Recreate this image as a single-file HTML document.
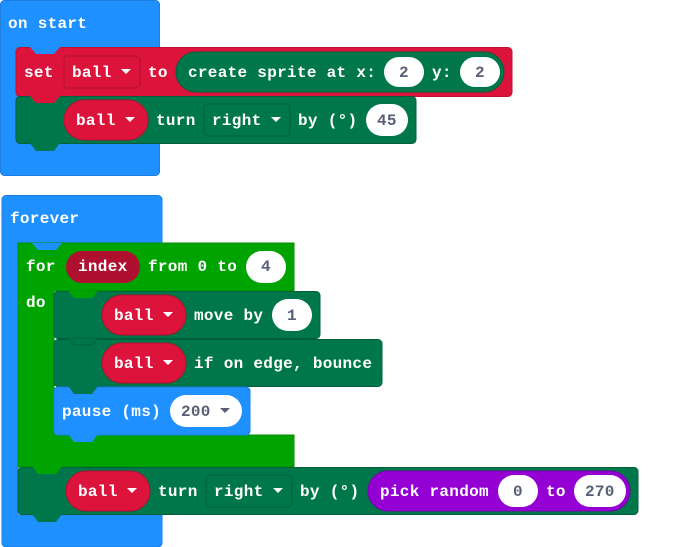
<!DOCTYPE html>
<html><head><style>
html,body{margin:0;padding:0;background:#fff;width:690px;height:547px;overflow:hidden}
svg text{font-family:"Liberation Mono",monospace;font-weight:bold;font-size:16px;letter-spacing:0.3px;fill:#fff}
svg text.n{fill:#575e75}
</style></head><body>
<svg width="690" height="547" xmlns="http://www.w3.org/2000/svg">
<!-- on start -->
<rect x="0.5" y="0.5" width="159" height="175" rx="4" fill="#1e90ff" stroke="#1a7fe0"/>
<text x="8" y="28">on start</text>
<!-- set block -->
<rect x="16" y="47.5" width="496" height="49" rx="4" fill="#dc143c" stroke="#c0112f"/>
<path d="M30 47 l6 7 h18 l6 -7z" fill="#1e90ff"/>
<text x="24" y="77">set</text>
<rect x="64" y="56" width="76" height="32" rx="4" fill="#dc143c" stroke="#b01030"/>
<text x="72" y="77">ball</text><path d="M121 69 h10 l-5 5z" fill="#fff"/>
<text x="148" y="77">to</text>
<rect x="176" y="52" width="328" height="40" rx="20" fill="#00774a" stroke="#00603b"/>
<text x="188" y="77">create sprite at x:</text>
<rect x="384" y="57" width="40" height="30" rx="15" fill="#fff"/>
<text class="n" x="399" y="77">2</text>
<text x="432" y="77">y:</text>
<rect x="460" y="57" width="40" height="30" rx="15" fill="#fff"/>
<text class="n" x="475" y="77">2</text>
<!-- turn block -->
<rect x="16" y="96.5" width="400" height="47" rx="4" fill="#00774a" stroke="#00603b"/>
<path d="M30 96 l6 7 h18 l6 -7z" fill="#dc143c"/>
<path d="M30 143 l6 8 h18 l6 -8z" fill="#00774a"/>
<rect x="64" y="100" width="84" height="40" rx="20" fill="#dc143c" stroke="#b01030"/>
<text x="76" y="125">ball</text><path d="M125 117 h10 l-5 5z" fill="#fff"/>
<text x="156" y="125">turn</text>
<rect x="204" y="104" width="86" height="32" rx="4" fill="#00774a" stroke="#00603b"/>
<text x="212" y="125">right</text><path d="M271 117 h10 l-5 5z" fill="#fff"/>
<text x="298" y="125">by (°)</text>
<rect x="366" y="104" width="42" height="32" rx="16" fill="#fff"/>
<text class="n" x="377" y="125">45</text>

<!-- forever -->
<path d="M6 195.5 h152 a4 4 0 0 1 4 4 V243 H18 V515 H162 V543 a4 4 0 0 1 -4 4 H6 a4 4 0 0 1 -4 -4 V199.5 a4 4 0 0 1 4 -4z" fill="#1e90ff" stroke="#1a7fe0"/>
<text x="10" y="223">forever</text>
<!-- for block -->
<path d="M18 243 H294 V291 H54 V435 H294 V467 H18z" fill="#00a400" stroke="#009000"/>
<path d="M32 243 l6 7 h18 l6 -7z" fill="#1e90ff"/>
<text x="26" y="271">for</text>
<rect x="66" y="251" width="74" height="32" rx="16" fill="#b01030"/>
<text x="78" y="271">index</text>
<text x="148" y="271">from 0 to</text>
<rect x="246" y="251" width="40" height="32" rx="16" fill="#fff"/>
<text class="n" x="261" y="271">4</text>
<text x="26" y="307">do</text>
<!-- move -->
<rect x="54" y="291.5" width="266" height="47" rx="4" fill="#00774a" stroke="#00603b"/>
<path d="M68 291 l6 7 h18 l6 -7z" fill="#00a400"/>
<rect x="102" y="295" width="84" height="40" rx="20" fill="#dc143c" stroke="#b01030"/>
<text x="114" y="320">ball</text><path d="M163 312 h10 l-5 5z" fill="#fff"/>
<text x="194" y="320">move by</text>
<rect x="272" y="299" width="40" height="32" rx="16" fill="#fff"/>
<text class="n" x="287" y="320">1</text>
<!-- bounce -->
<rect x="54" y="339.5" width="328" height="47" rx="4" fill="#00774a" stroke="#00603b"/>
<path d="M68 338 l6 7 h18 l6 -7z" fill="#00774a" stroke="#00603b"/>
<rect x="102" y="343" width="84" height="40" rx="20" fill="#dc143c" stroke="#b01030"/>
<text x="114" y="368">ball</text><path d="M163 360 h10 l-5 5z" fill="#fff"/>
<text x="194" y="368">if on edge, bounce</text>
<!-- pause -->
<rect x="54" y="387" width="196" height="48" rx="4" fill="#1e90ff" stroke="#1a7fe0"/>
<path d="M68 386 l6 8 h18 l6 -8z" fill="#00774a"/>
<path d="M68 434 l6 8 h18 l6 -8z" fill="#1e90ff"/>
<text x="62" y="416">pause (ms)</text>
<rect x="170" y="395" width="72" height="32" rx="16" fill="#fff"/>
<text class="n" x="181" y="416">200</text><path d="M220 408 h10 l-5 5z" fill="#575e75"/>
<!-- bottom turn -->
<rect x="18" y="467.5" width="620" height="47" rx="4" fill="#00774a" stroke="#00603b"/>
<path d="M32 466 l6 8 h18 l6 -8z" fill="#00a400"/>
<path d="M32 514 l6 8 h18 l6 -8z" fill="#00774a"/>
<rect x="66" y="471" width="84" height="40" rx="20" fill="#dc143c" stroke="#b01030"/>
<text x="78" y="496">ball</text><path d="M127 488 h10 l-5 5z" fill="#fff"/>
<text x="158" y="496">turn</text>
<rect x="206" y="475" width="86" height="32" rx="4" fill="#00774a" stroke="#00603b"/>
<text x="214" y="496">right</text><path d="M273 488 h10 l-5 5z" fill="#fff"/>
<text x="300" y="496">by (°)</text>
<rect x="368" y="471" width="262" height="40" rx="20" fill="#9400d3" stroke="#7a00b0"/>
<text x="380" y="496">pick random</text>
<rect x="498" y="475" width="40" height="32" rx="16" fill="#fff"/>
<text class="n" x="513" y="496">0</text>
<text x="546" y="496">to</text>
<rect x="574" y="475" width="52" height="32" rx="16" fill="#fff"/>
<text class="n" x="585" y="496">270</text>
</svg>
</body></html>
